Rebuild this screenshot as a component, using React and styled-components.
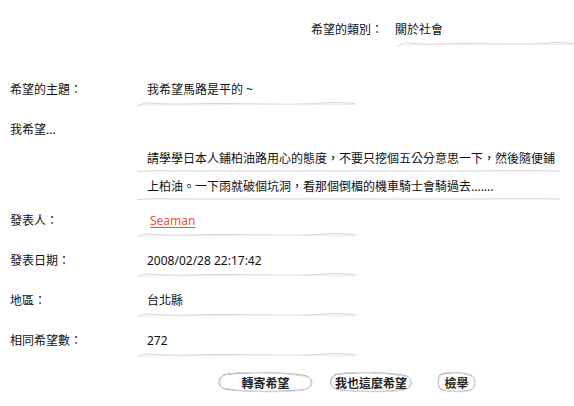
import React from "react";
import styled, { createGlobalStyle } from "styled-components";

const GlobalStyle = createGlobalStyle`
  body {
    margin: 0;
    background: #fff;
    font-family: "Noto Sans", "Noto Sans CJK TC", sans-serif;
    font-size: 12px;
    color: #111;
  }
`;

const wish = {
  category: "關於社會",
  title: "我希望馬路是平的 ~",
  body: [
    "請學學日本人鋪柏油路用心的態度，不要只挖個五公分意思一下，然後隨便鋪",
    "上柏油。一下雨就破個坑洞，看那個倒楣的機車騎士會騎過去.......",
  ],
  author: "Seaman",
  date: "2008/02/28 22:17:42",
  area: "台北縣",
  count: "272",
};

// hand drawn grey line under each value
const Squiggle = ({ width, offset = -10 }) => (
  <SquiggleSvg
    width={width}
    height="6"
    viewBox="0 0 200 6"
    preserveAspectRatio="none"
    style={{ marginLeft: offset }}
  >
    <path
      d="M0 5 C6 2 10 1 16 2.5 C40 4 60 2 90 2.5 C120 3 150 4 170 2 C182 1 192 2 200 2.5"
      fill="none"
      stroke="#d6d6d6"
      strokeWidth="1"
      vectorEffect="non-scaling-stroke"
    />
    <path
      d="M4 4 C20 3.5 50 4.5 80 3.5 C110 2.5 140 4 160 3.5 C180 3 190 3.5 200 3.5"
      fill="none"
      stroke="#ebebeb"
      strokeWidth="1"
      vectorEffect="non-scaling-stroke"
    />
  </SquiggleSvg>
);

const Oval = () => (
  <OvalSvg viewBox="0 0 100 24" preserveAspectRatio="none">
    <path
      d="M8 4 C30 1 70 1 90 5 C99 8 99 17 90 20 C70 23 30 23 10 20 C1 18 1 8 8 4 C20 2 40 1 55 2"
      fill="none"
      stroke="#a8a8a8"
      strokeWidth="1"
      vectorEffect="non-scaling-stroke"
    />
    <path
      d="M12 3 C35 0 75 2 94 7 C98 12 96 18 88 21 C60 24 25 23 6 18 C2 12 4 7 12 3"
      fill="none"
      stroke="#d8d8d8"
      strokeWidth="1"
      vectorEffect="non-scaling-stroke"
    />
  </OvalSvg>
);

const App = () => {
  return (
    <Page>
      <GlobalStyle />
      <TopRow>
        <TopLabel>希望的類別：</TopLabel>
        <Value>
          <Text>{wish.category}</Text>
          <Squiggle width={176} offset={3} />
        </Value>
      </TopRow>

      <Row>
        <Label>希望的主題：</Label>
        <Value>
          <Text>{wish.title}</Text>
          <Squiggle width={218} />
        </Value>
      </Row>

      <IntroRow>
        <Label>我希望...</Label>
      </IntroRow>
      <Body>
        {wish.body.map((line, i) => (
          <BodyLine key={i}>
            <BodyText>{line}</BodyText>
            <Squiggle width={423} />
          </BodyLine>
        ))}
      </Body>

      <Row>
        <Label>發表人：</Label>
        <Value>
          <Author href="#">{wish.author}</Author>
          <Squiggle width={218} />
        </Value>
      </Row>
      <Row>
        <Label>發表日期：</Label>
        <Value>
          <Text>{wish.date}</Text>
          <Squiggle width={218} />
        </Value>
      </Row>
      <Row>
        <Label>地區：</Label>
        <Value>
          <Text>{wish.area}</Text>
          <Squiggle width={218} />
        </Value>
      </Row>
      <Row>
        <Label>相同希望數：</Label>
        <Value>
          <Text>{wish.count}</Text>
          <Squiggle width={218} />
        </Value>
      </Row>

      <Buttons>
        <Button $w={99}>
          <Oval />
          <span>轉寄希望</span>
        </Button>
        <Button $w={86} $ml={13}>
          <Oval />
          <span>我也這麼希望</span>
        </Button>
        <Button $w={39} $ml={23}>
          <Oval />
          <span>檢舉</span>
        </Button>
      </Buttons>
    </Page>
  );
};

const Page = styled.div`
  width: 574px;
  height: 406px;
  padding-top: 20px;
  box-sizing: border-box;
  overflow: hidden;
`;

const TopRow = styled.div`
  display: flex;
  height: 60px;
  padding-left: 311px;
`;

const TopLabel = styled.div`
  width: 84px;
  line-height: 20px;
`;

const Row = styled.div`
  display: flex;
  height: 40px;
  padding-left: 10px;
`;

const IntroRow = styled(Row)`
  height: 24px;
`;

const Label = styled.div`
  width: 137px;
  flex: none;
  line-height: 20px;
`;

const Value = styled.div`
  display: flex;
  flex-direction: column;
  align-items: flex-start;
`;

const Text = styled.div`
  line-height: 20px;
  white-space: nowrap;
`;

const BodyText = styled(Text)`
  letter-spacing: 0;
`;

const SquiggleSvg = styled.svg`
  display: block;
  margin-top: 1px;
`;

const Body = styled.div`
  padding-left: 147px;
  height: 67px;
`;

const BodyLine = styled.div`
  display: flex;
  flex-direction: column;
  align-items: flex-start;
  height: 28px;
  padding-top: 5px;
  box-sizing: border-box;
`;

const Author = styled.a`
  display: block;
  margin-left: 3px;
  line-height: 20px;
  color: #ee5533;
  text-decoration: underline;
  text-underline-offset: 2px;
`;

const Buttons = styled.div`
  display: flex;
  align-items: center;
  padding-left: 216px;
  height: 24px;
  margin-top: -1px;
`;

const Button = styled.button`
  position: relative;
  width: ${(p) => p.$w}px;
  height: 22px;
  margin-left: ${(p) => p.$ml || 0}px;
  padding: 0;
  border: none;
  background: transparent;
  font-family: "Noto Sans CJK TC", sans-serif;
  font-size: 12px;
  font-weight: bold;
  color: #222;
  cursor: pointer;
  span {
    position: relative;
  }
`;

const OvalSvg = styled.svg`
  position: absolute;
  inset: 0;
  width: 100%;
  height: 100%;
`;

export default App;
